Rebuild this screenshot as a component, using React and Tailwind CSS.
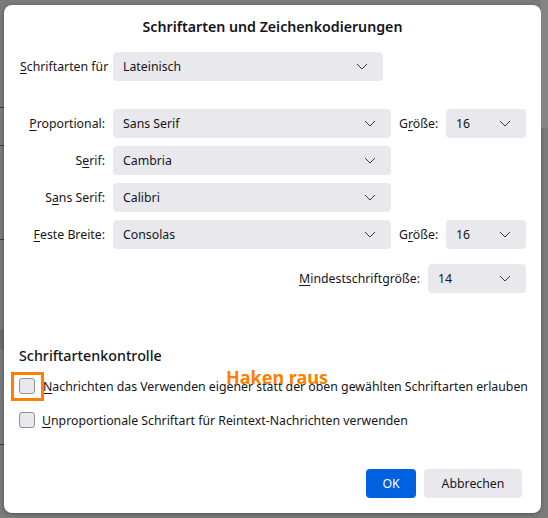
import React from "react";

const font = { fontFamily: '"Noto Sans", "Open Sans", sans-serif' };

// small chevron used by every dropdown
const Chevron = () => (
  <svg width="12" height="7" viewBox="0 0 12 7" fill="none" className="shrink-0">
    <path d="M1 1l5 5 5-5" stroke="#3a3a3a" strokeWidth="1" />
  </svg>
);

const Select = ({ value, width }) => (
  <div
    className="h-[29px] rounded-[4px] bg-[#e9e9ed] flex items-center justify-between pl-[10px] pr-[15px] text-[12.3px] text-[#15141a]"
    style={{ width }}
  >
    <span className="pt-[2px]">{value}</span>
    <Chevron />
  </div>
);

// label with an underlined access key
const Key = ({ pre = "", k, post = "" }) => (
  <span>
    {pre}
    <span className="underline underline-offset-2">{k}</span>
    {post}
  </span>
);

const Row = ({ label, children }) => (
  <div className="flex items-center gap-[8px]">
    <div className="w-[86px] pt-[2px] text-right text-[12.3px] text-[#15141a] whitespace-nowrap">{label}</div>
    {children}
  </div>
);

const Checkbox = () => (
  <div className="w-[16px] h-[16px] rounded-[3px] border border-[#8f8f9d] bg-[#e9e9ed] shrink-0" />
);

export default function App() {
  return (
    <div className="w-[548px] h-[518px] bg-[#7b7b7b] flex overflow-hidden" style={font}>
      {/* bits of the window behind the dialog */}
      <div className="w-[4px] flex flex-col shrink-0">
        <div className="h-[107px]" />
        <div className="h-px bg-[#3c3c3c]" />
        <div className="h-[37px]" />
        <div className="h-px bg-[#3c3c3c]" />
        <div className="h-[93px]" />
        <div className="h-px bg-[#3c3c3c]" />
        <div className="h-[89px]" />
        <div className="h-[20px] bg-[#6c6c6c]" />
        <div className="h-[95px]" />
        <div className="h-px bg-[#3c3c3c]" />
      </div>

      <div className="mt-[5px] w-[537px] h-[508px] bg-white rounded-[8px] shadow-[0_1px_4px_rgba(0,0,0,0.35)] flex flex-col text-[#15141a] shrink-0">
        <div className="mt-[12px] h-[20px] leading-[20px] text-center text-[14.2px] font-semibold">
          Schriftarten und Zeichenkodierungen
        </div>

        <div className="mt-[15px] ml-[15px] flex items-center gap-[8px]">
          <div className="w-[86px] pl-[1px] pt-[2px] text-[12.3px] whitespace-nowrap">
            <Key k="S" post="chriftarten für" />
          </div>
          <Select value="Lateinisch" width={270} />
        </div>

        <div className="mt-[28px] ml-[15px] flex flex-col gap-[8px]">
          <Row label={<Key k="P" post="roportional:" />}>
            <Select value="Sans Serif" width={278} />
            <span className="text-[12.3px] pt-[2px] w-[39px]">
              <Key pre="G" k="r" post="öße:" />
            </span>
            <Select value="16" width={80} />
          </Row>
          <Row label={<Key pre="S" k="e" post="rif:" />}>
            <Select value="Cambria" width={278} />
          </Row>
          <Row label={<Key pre="S" k="a" post="ns Serif:" />}>
            <Select value="Calibri" width={278} />
          </Row>
          <Row label={<Key k="F" post="este Breite:" />}>
            <Select value="Consolas" width={278} />
            <span className="text-[12.3px] pt-[2px] w-[39px]">
              <Key pre="G" k="r" post="öße:" />
            </span>
            <Select value="16" width={80} />
          </Row>
        </div>

        <div className="mt-[15px] mr-[15px] flex items-center justify-end gap-[8px]">
          <span className="text-[12.3px] pt-[2px]">
            <Key k="M" post="indestschriftgröße:" />
          </span>
          <Select value="14" width={98} />
        </div>

        <div className="mt-[53px] ml-[15px] h-[20px] leading-[20px] text-[14.3px] font-medium">
          Schriftartenkontrolle
        </div>

        <div className="mt-[10px] ml-[15px] h-[20px] flex items-center gap-[8px] text-[12.3px] relative">
          <div className="relative">
            <Checkbox />
            <div className="absolute left-[-8px] top-[-6px] w-[33px] h-[29px] border-[3px] border-[#ff7f00]" />
          </div>
          <span className="whitespace-nowrap pt-[2px]">
            <Key k="N" post="achrichten das Verwenden eigener statt der oben gewählten Schriftarten erlauben" />
          </span>
          <span className="absolute left-[207px] top-[-11px] text-[18px] font-bold text-[#ff7f00] leading-[24px] whitespace-nowrap">
            Haken raus
          </span>
        </div>

        <div className="mt-[14px] ml-[15px] h-[20px] flex items-center gap-[7px] text-[12.3px]">
          <Checkbox />
          <span className="whitespace-nowrap pt-[2px]">
            <Key k="U" post="nproportionale Schriftart für Reintext-Nachrichten verwenden" />
          </span>
        </div>

        <div className="mt-[39px] mr-[19px] flex justify-end gap-[8px]">
          <button className="w-[50px] h-[29px] pt-[2px] rounded-[4px] bg-[#0061e0] text-white text-[12.3px]">OK</button>
          <button className="w-[98px] h-[29px] pt-[2px] rounded-[4px] bg-[#e9e9ed] text-[#15141a] text-[12.3px]">Abbrechen</button>
        </div>
      </div>

      <div className="flex-1 flex flex-col">
        <div className="h-[128px] bg-[#858585]" />
        <div className="flex-1" />
      </div>
    </div>
  );
}
